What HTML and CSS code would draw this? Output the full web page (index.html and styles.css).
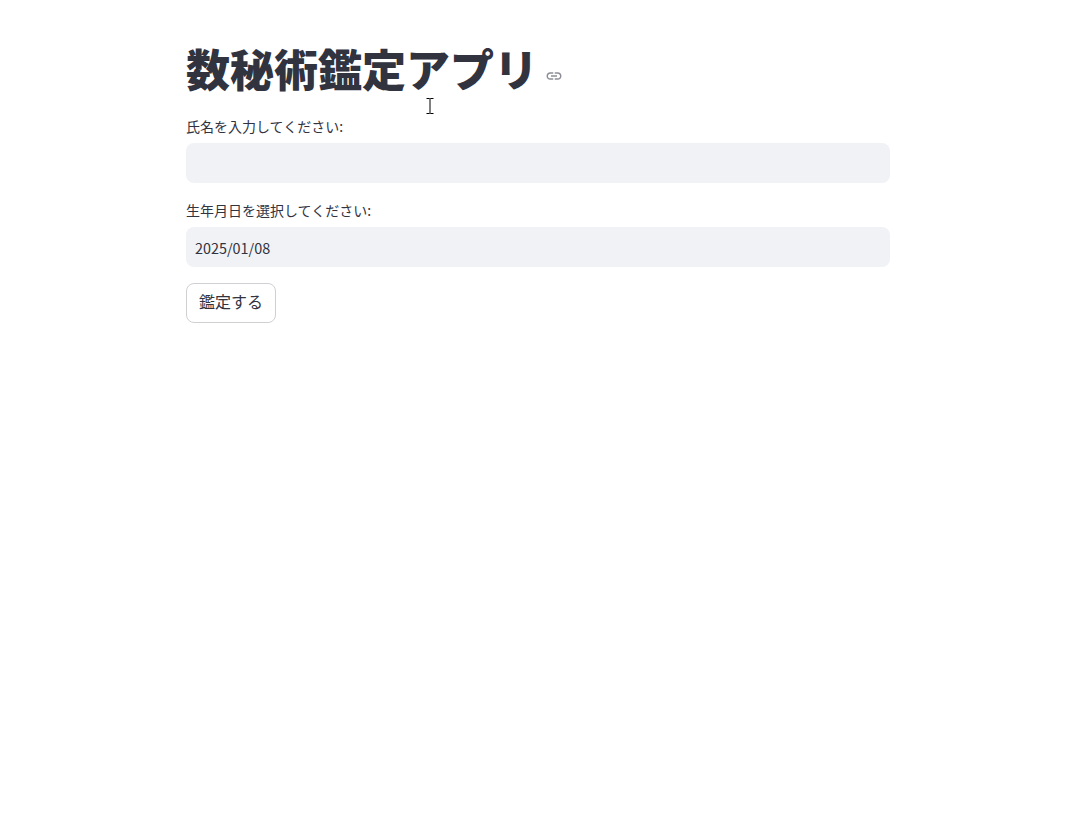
FILE: index.html
```html
<!DOCTYPE html>
<html lang="ja">
<head>
    <meta charset="UTF-8">
    <meta name="viewport" content="width=device-width, initial-scale=1.0">
    <title>数秘術鑑定アプリ</title>
    <link rel="stylesheet" href="styles.css">
</head>
<body>
    <div class="container">
        <div class="title-row">
            <h1>数秘術鑑定アプリ</h1>
            <svg class="link-icon" viewBox="0 0 24 24" width="18" height="18" aria-hidden="true">
                <path d="M3.9 12c0-1.71 1.39-3.1 3.1-3.1h4V7H7c-2.76 0-5 2.24-5 5s2.24 5 5 5h4v-1.9H7c-1.71 0-3.1-1.39-3.1-3.1zM8 13h8v-2H8v2zm9-6h-4v1.9h4c1.71 0 3.1 1.39 3.1 3.1s-1.39 3.1-3.1 3.1h-4V17h4c2.76 0 5-2.24 5-5s-2.24-5-5-5z"/>
            </svg>
        </div>

        <div class="field">
            <label for="name">氏名を入力してください:</label>
            <input id="name" class="text-input" type="text">
        </div>

        <div class="field">
            <label for="birthday">生年月日を選択してください:</label>
            <input id="birthday" class="text-input" type="text" value="2025/01/08">
        </div>

        <button class="btn">鑑定する</button>
    </div>

    <!-- mouse pointer caught in the screenshot -->
    <svg class="cursor" viewBox="0 0 8 16" width="8" height="16" aria-hidden="true">
        <path d="M0.5 0.5h3l.5.5.5-.5h3M4 1v14M0.5 15.5h3l.5-.5.5.5h3"/>
    </svg>
</body>
</html>
```

FILE: styles.css
```css
html, body {
    height: 100%;
}
body {
    margin: 0;
    background: #ffffff;
    color: #31333f;
    font-family: "Noto Sans CJK JP", sans-serif;
    font-size: 14px;
}
.container {
    width: 704px;
    margin-left: 186px;
    padding-top: 42px;
}
.title-row {
    display: flex;
    align-items: center;
    gap: 7px;
    height: 52px;
    margin-bottom: 22px;
}
h1 {
    margin: 0;
    font-size: 44px;
    font-weight: 900;
    line-height: 52px;
    white-space: nowrap;
}
.link-icon {
    fill: #8d8e95;
    margin-top: 16px;
}
.field + .field {
    margin-top: 17px;
}
label {
    display: block;
    height: 20px;
    margin-bottom: 7px;
    font-size: 14px;
    line-height: 20px;
}
.text-input {
    display: block;
    box-sizing: border-box;
    width: 100%;
    height: 40px;
    padding: 0 9px;
    border: none;
    border-radius: 8px;
    background: #f0f2f6;
    color: #31333f;
    font-family: "Noto Sans CJK JP", sans-serif;
    font-size: 14.4px;
    outline: none;
}
.btn {
    display: block;
    box-sizing: border-box;
    width: 90px;
    height: 40px;
    margin-top: 16px;
    padding: 0 0 4px;
    border: 1px solid #cfd0d4;
    border-radius: 8px;
    background: #ffffff;
    color: #31333f;
    font-family: "Noto Sans CJK JP", sans-serif;
    font-size: 16px;
}
.cursor {
    position: absolute;
    left: 426px;
    top: 98px;
    fill: none;
    stroke: #000000;
    stroke-width: 1;
}
```
